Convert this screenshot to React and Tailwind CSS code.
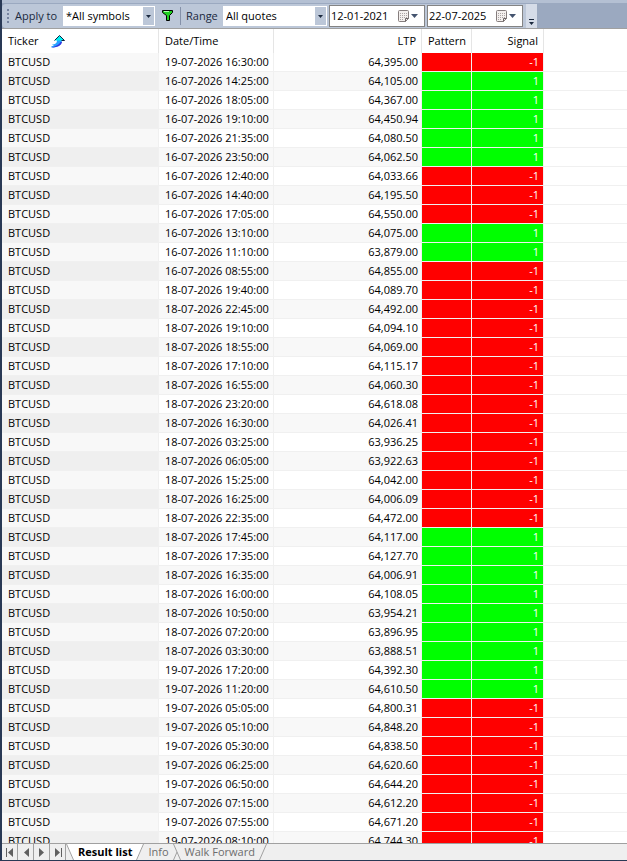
import React, { useState } from 'react';

const rows = [
  ['19-07-2026 16:30:00', '64,395.00', -1],
  ['16-07-2026 14:25:00', '64,105.00', 1],
  ['16-07-2026 18:05:00', '64,367.00', 1],
  ['16-07-2026 19:10:00', '64,450.94', 1],
  ['16-07-2026 21:35:00', '64,080.50', 1],
  ['16-07-2026 23:50:00', '64,062.50', 1],
  ['16-07-2026 12:40:00', '64,033.66', -1],
  ['16-07-2026 14:40:00', '64,195.50', -1],
  ['16-07-2026 17:05:00', '64,550.00', -1],
  ['16-07-2026 13:10:00', '64,075.00', 1],
  ['16-07-2026 11:10:00', '63,879.00', 1],
  ['16-07-2026 08:55:00', '64,855.00', -1],
  ['18-07-2026 19:40:00', '64,089.70', -1],
  ['18-07-2026 22:45:00', '64,492.00', -1],
  ['18-07-2026 19:10:00', '64,094.10', -1],
  ['18-07-2026 18:55:00', '64,069.00', -1],
  ['18-07-2026 17:10:00', '64,115.17', -1],
  ['18-07-2026 16:55:00', '64,060.30', -1],
  ['18-07-2026 23:20:00', '64,618.08', -1],
  ['18-07-2026 16:30:00', '64,026.41', -1],
  ['18-07-2026 03:25:00', '63,936.25', -1],
  ['18-07-2026 06:05:00', '63,922.63', -1],
  ['18-07-2026 15:25:00', '64,042.00', -1],
  ['18-07-2026 16:25:00', '64,006.09', -1],
  ['18-07-2026 22:35:00', '64,472.00', -1],
  ['18-07-2026 17:45:00', '64,117.00', 1],
  ['18-07-2026 17:35:00', '64,127.70', 1],
  ['18-07-2026 16:35:00', '64,006.91', 1],
  ['18-07-2026 16:00:00', '64,108.05', 1],
  ['18-07-2026 10:50:00', '63,954.21', 1],
  ['18-07-2026 07:20:00', '63,896.95', 1],
  ['18-07-2026 03:30:00', '63,888.51', 1],
  ['19-07-2026 17:20:00', '64,392.30', 1],
  ['19-07-2026 11:20:00', '64,610.50', 1],
  ['19-07-2026 05:05:00', '64,800.31', -1],
  ['19-07-2026 05:10:00', '64,848.20', -1],
  ['19-07-2026 05:30:00', '64,838.50', -1],
  ['19-07-2026 06:25:00', '64,620.60', -1],
  ['19-07-2026 06:50:00', '64,644.20', -1],
  ['19-07-2026 07:15:00', '64,612.20', -1],
  ['19-07-2026 07:55:00', '64,671.20', -1],
  ['19-07-2026 08:10:00', '64,744.30', -1],
];

function SelectBox({ label, value, className }) {
  return (
    <div className={`relative h-5 bg-white ${className}`}>
      <select aria-label={label} className="w-full h-5 pl-[3px] appearance-none bg-transparent outline-none">
        <option>{value}</option>
      </select>
      <span className="pointer-events-none absolute right-px top-px bottom-px w-[11px] bg-[#bcc7d8] flex items-center justify-center">
        <svg width="5" height="3" viewBox="0 0 5 3"><path d="M0 0h5L2.5 3z" fill="#1b293e" /></svg>
      </span>
    </div>
  );
}

function DateBox({ label, value }) {
  return (
    <div className="flex items-center w-24 h-[22px] border border-[#848484] bg-white">
      <input aria-label={label} defaultValue={value} className="w-[68px] pl-px bg-transparent outline-none" />
      <button aria-label={`Open ${label} calendar`} className="flex items-center gap-[2px]">
        <svg width="11" height="12" viewBox="0 0 11 12" fill="none">
          <path d="M1.5.5h8a1 1 0 0 1 1 1v7l-3 3h-6a1 1 0 0 1-1-1v-9a1 1 0 0 1 1-1z" fill="#f4f0ee" stroke="#857d7d" />
          <path d="M2 3.500h7M2 5.500h7M2 7.500h7M2 9.500h4" stroke="#aaa4a4" strokeDasharray="1 1" />
          <path d="M7.500 11.500v-3h3" stroke="#6b6464" />
        </svg>
        <svg width="7" height="4" viewBox="0 0 7 4"><path d="M0 0h7L3.500 4z" fill="#44546f" /></svg>
      </button>
    </div>
  );
}

function Toolbar() {
  return (
    <div className="flex h-[29px] border-t-[3px] border-t-[#b4c0d3] border-b border-b-[#a0a0a0] bg-[#9ba9c0]">
      <div className="flex items-center mt-px rounded-l-sm bg-[#bcc7d8] text-[#1b293e]">
        <svg className="mx-[5px]" width="3" height="14" viewBox="0 0 3 14">
          <path d="M0 0h2v2H0zM0 4h2v2H0zM0 8h2v2H0zM0 12h2v2H0z" fill="#7784a0" />
        </svg>
        <span className="w-12">Apply to</span>
        <SelectBox label="Apply to" value="*All symbols" className="w-[92px] text-black" />
        <button aria-label="Filter" className="ml-[7px]">
          <svg width="11" height="12" viewBox="0 0 11 12">
            <path d="M.5.5h10v2L7.500 5.500v5h-3v-5L.5 2.500z" fill="#20d020" stroke="#000" />
            <path d="M2 1.500h5" stroke="#b0ffb0" />
          </svg>
        </button>
        <span className="ml-[7px] mr-[5px] w-px h-[18px] bg-[#8591a9]" />
        <span className="w-[37px]">Range</span>
        <SelectBox label="Range" value="All quotes" className="w-[104px] text-black" />
        <div className="flex gap-[2px] ml-[2px] text-black">
          <DateBox label="From date" value="12-01-2021" />
          <DateBox label="To date" value="22-07-2025" />
        </div>
        <span className="w-[3px]" />
      </div>
      <button aria-label="Toolbar options" className="mt-px w-[11px] flex justify-center items-end pb-[3px] bg-[#d5dce8]">
        <svg width="5" height="6" viewBox="0 0 5 6"><path d="M0 0h5v1H0zM0 3h5L2.500 6z" fill="#1b293e" /></svg>
      </button>
    </div>
  );
}

function ResultTable() {
  return (
    <table className="w-full table-fixed border-separate border-spacing-0">
      <colgroup>
        <col className="w-[157px]" />
        <col className="w-[115px]" />
        <col className="w-[148px]" />
        <col className="w-[50px]" />
        <col className="w-[72px]" />
        <col />
      </colgroup>
      <thead>
        <tr className="h-6 text-left [&>th]:p-0 [&>th]:font-normal [&>th]:border-r [&>th]:border-[#e5e5e5]">
          <th>
            <span className="flex items-center gap-3 pl-[6px]">
              Ticker
              <svg width="14" height="13" viewBox="0 0 14 13">
                <path d="M6 5h5c0 4-3 7.500-10.500 7.500V11L3 11L1 9.500C4 9.500 6 8.500 6 5z" fill="#28a0ff" />
                <path d="M.5 12.500C7 12.500 10.500 10 11 7L9.500 7C8 10 5 11 .5 12.500z" fill="#3434e0" />
                <path d="M3.500 5.500L8.500.5l5 5z" fill="#00f0f0" />
                <path d="M3.500 5.500L8.500.5l5 5h-3" fill="none" stroke="#102040" />
              </svg>
            </span>
          </th>
          <th><span className="pl-[6px]">Date/Time</span></th>
          <th className="text-right"><span className="pr-[5px]">LTP</span></th>
          <th className="text-right"><span className="pr-[5px]">Pattern</span></th>
          <th className="text-right"><span className="pr-[5px]">Signal</span></th>
          <th className="border-r-0!"></th>
        </tr>
      </thead>
      <tbody>
        {rows.map(([date, ltp, signal], i) => {
          const even = i % 2 === 0;
          const fill = signal > 0 ? 'bg-[#00ff00]' : 'bg-[#ff0000]';
          return (
            <tr key={date} className="h-[19px] [&>td]:p-0 [&>td]:border-b [&>td]:border-r [&>td]:border-[#f0f0f0]">
              <td className={even ? 'bg-[#f8f8f8]' : 'bg-[#efefef]'}><span className="pl-[6px]">BTCUSD</span></td>
              <td className={even ? 'bg-white' : 'bg-[#f8f8f8]'}><span className="pl-[6px]">{date}</span></td>
              <td className={`text-right ${even ? 'bg-white' : 'bg-[#f8f8f8]'}`}><span className="pr-[3px]">{ltp}</span></td>
              <td className={fill}></td>
              <td className={`text-right text-white ${fill}`}><span className="pr-1">{signal}</span></td>
              <td className="border-r-0!"></td>
            </tr>
          );
        })}
      </tbody>
    </table>
  );
}

const navIcons = [
  ['First', 'M1 0h1v9H1zM8 0v9L3 4.500z'],
  ['Previous', 'M8 0v9L3 4.500z'],
  ['Next', 'M2 0v9l5-4.500z'],
  ['Last', 'M2 0v9l5-4.500zM8 0h1v9H8z'],
];

function TabBar() {
  const [active, setActive] = useState('Result list');
  const tabs = ['Result list', 'Info', 'Walk Forward'];
  return (
    <div className="flex h-[18px] border-t border-t-[#a0a0a0] border-b border-b-[#293955] bg-[#efefef]">
      {navIcons.map(([name, d]) => (
        <button key={name} aria-label={name} className="w-4 flex items-center justify-center border-r border-[#a0a0a0]">
          <svg width="10" height="9" viewBox="0 0 10 9"><path d={d} fill="#606060" /></svg>
        </button>
      ))}
      <svg width="8" height="16" viewBox="0 0 8 16">
        <path d="M0 0h8v16H7z" fill={active === 'Result list' ? '#fff' : 'none'} />
        <path d="M.5 0l7 16" stroke="#a0a0a0" />
      </svg>
      {tabs.map((name, i) => (
        <React.Fragment key={name}>
          <button
            onClick={() => setActive(name)}
            className={`h-4 leading-4 px-1 whitespace-nowrap ${active === name ? 'font-bold text-black bg-white' : 'text-[#6d6d6d]'}`}
          >
            {name}
          </button>
          <svg width="8" height="16" viewBox="0 0 8 16" fill="none">
            {active === name && <path d="M0 0h8L1 16H0z" fill="#fff" />}
            {i === 1 ? (
              <path d="M.5 0l7 16M4 8L.5 16" stroke="#a0a0a0" />
            ) : (
              <path d="M7.500 0l-7 16" stroke="#a0a0a0" />
            )}
          </svg>
        </React.Fragment>
      ))}
    </div>
  );
}

function App() {
  return (
    <div className="flex flex-col h-screen overflow-hidden border-l-2 border-[#293955] bg-white text-black text-[11px] leading-4 font-['Open_Sans','Noto_Sans',sans-serif]">
      <Toolbar />
      <div className="flex-1 min-h-0 overflow-hidden">
        <ResultTable />
      </div>
      <TabBar />
    </div>
  );
}

export default App;
